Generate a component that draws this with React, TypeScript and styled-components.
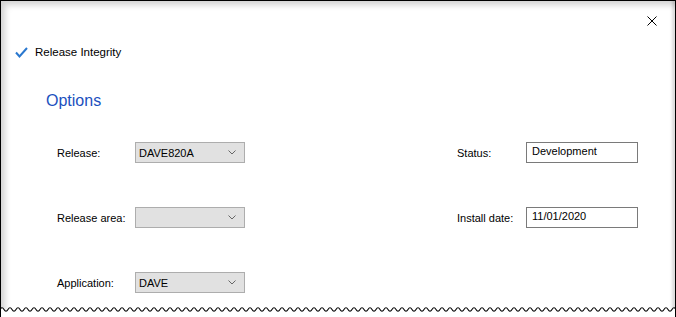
import * as React from 'react';
import styled, {createGlobalStyle} from 'styled-components';

const GlobalStyle = createGlobalStyle`
  html, body {
    margin: 0;
    padding: 0;
    background: #fff;
  }
  body {
    font-family: "Liberation Sans", Arial, sans-serif;
    font-size: 11px;
    color: #000;
  }
`;

const Window = styled.div`
  box-sizing: border-box;
  width: 676px;
  height: 317px;
  display: flex;
  flex-direction: column;
  border: 1px solid #000;
  border-bottom: none;
  background: #fff;
  box-shadow: inset 7px 7px 6px -3px rgba(0, 0, 0, 0.18),
    inset -6px 0 3px -3px rgba(0, 0, 0, 0.14);
  overflow: hidden;
`;

const TitleBar = styled.div`
  display: flex;
  justify-content: flex-end;
  padding: 15px 18px 0 0;
`;

const Header = styled.div`
  display: flex;
  align-items: center;
  gap: 7px;
  height: 14px;
  margin: 19px 0 0 14px;
  font-size: 11.5px;
`;

const Heading = styled.h2`
  margin: 32px 0 0 45px;
  font-size: 16px;
  line-height: 20px;
  font-weight: normal;
  color: #1b50be;
`;

const Form = styled.div`
  display: grid;
  grid-template-columns: 78px 110px 1fr 69px 112px;
  grid-auto-rows: 21px;
  row-gap: 44px;
  margin-top: 31px;
  padding: 0 37px 0 56px;
`;

const Label = styled.div<{$col?: number}>`
  grid-column: ${({$col}) => $col || 1};
  align-self: center;
  white-space: nowrap;
`;

const Select = styled.div`
  grid-column: 2;
  box-sizing: border-box;
  display: flex;
  align-items: center;
  justify-content: space-between;
  padding: 0 8px 0 3px;
  background: #e1e1e1;
  border: 1px solid #adadad;
  color: #000;
`;

const TextBox = styled.div`
  grid-column: 5;
  box-sizing: border-box;
  padding: 2px 0 0 5px;
  background: #fff;
  border: 1px solid #7a7a7a;
`;

const Wave = styled.svg`
  display: block;
  margin: auto -1px 0;
  flex-shrink: 0;
`;

const Chevron = () => (
  <svg width="8" height="5" viewBox="0 0 8 5">
    <path d="M0.5 0.5 L4 4 L7.5 0.5" fill="none" stroke="#666" strokeWidth="1" />
  </svg>
);

const wavePath = (() => {
  let d = 'M0 2.5 q2 -3.5 4 0';
  for (let x = 4; x < 680; x += 4) d += ' t4 0';
  return d;
})();

export default function App() {
  return (
    <>
      <GlobalStyle />
      <Window>
        <TitleBar>
          <svg width="10" height="10" viewBox="0 0 10 10">
            <path d="M0.5 0.5 L9.5 9.5 M9.5 0.5 L0.5 9.5" stroke="#000" strokeWidth="1" />
          </svg>
        </TitleBar>
        <Header>
          <svg width="13" height="11" viewBox="0 0 13 11">
            <path d="M1 5.5 L4.5 9.5 L12 1" fill="none" stroke="#2a78cf" strokeWidth="2" />
          </svg>
          <span>Release Integrity</span>
        </Header>
        <Heading>Options</Heading>
        <Form>
          <Label>Release:</Label>
          <Select>
            <span>DAVE820A</span>
            <Chevron />
          </Select>
          <Label $col={4}>Status:</Label>
          <TextBox>Development</TextBox>

          <Label>Release area:</Label>
          <Select>
            <span />
            <Chevron />
          </Select>
          <Label $col={4}>Install date:</Label>
          <TextBox>11/01/2020</TextBox>

          <Label>Application:</Label>
          <Select>
            <span>DAVE</span>
            <Chevron />
          </Select>
        </Form>
        <Wave width="676" height="10" viewBox="0 0 676 10">
          <path d={`${wavePath} L680 10 L0 10 Z`} fill="#fff" />
          <path d={wavePath} fill="none" stroke="#000" strokeWidth="1.1" />
        </Wave>
      </Window>
    </>
  );
}
